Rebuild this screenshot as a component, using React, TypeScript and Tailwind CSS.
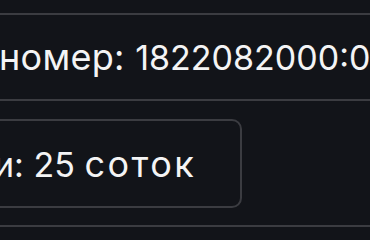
export default function App() {
  return (
    <div className="w-[370px] h-[240px] overflow-hidden bg-[#121419] text-[#f4f4f5]" style={{ fontFamily: "Inter, 'Noto Sans', sans-serif" }}>
      <div className="h-[13px]" />
      <div className="h-[88px] border-y-2 border-[#3b3c41] flex items-center overflow-hidden">
        <span className="whitespace-nowrap text-[34px] leading-none -ml-[1px]">
          <span className="text-[36px] tracking-[0.3px]">номер: </span>1822082000:01:001:0001
        </span>
      </div>
      <div className="h-[126px] border-b-2 border-[#3b3c41] pt-[18px]">
        <div className="h-[89px] w-[300px] -ml-[58px] border-2 border-[#3b3c41] rounded-[10px] flex items-center pl-[50px]">
          <span className="whitespace-nowrap text-[34px] leading-none">
            и: 25 <span className="text-[36px] tracking-[2.5px]">соток</span>
          </span>
        </div>
      </div>
    </div>
  );
}
